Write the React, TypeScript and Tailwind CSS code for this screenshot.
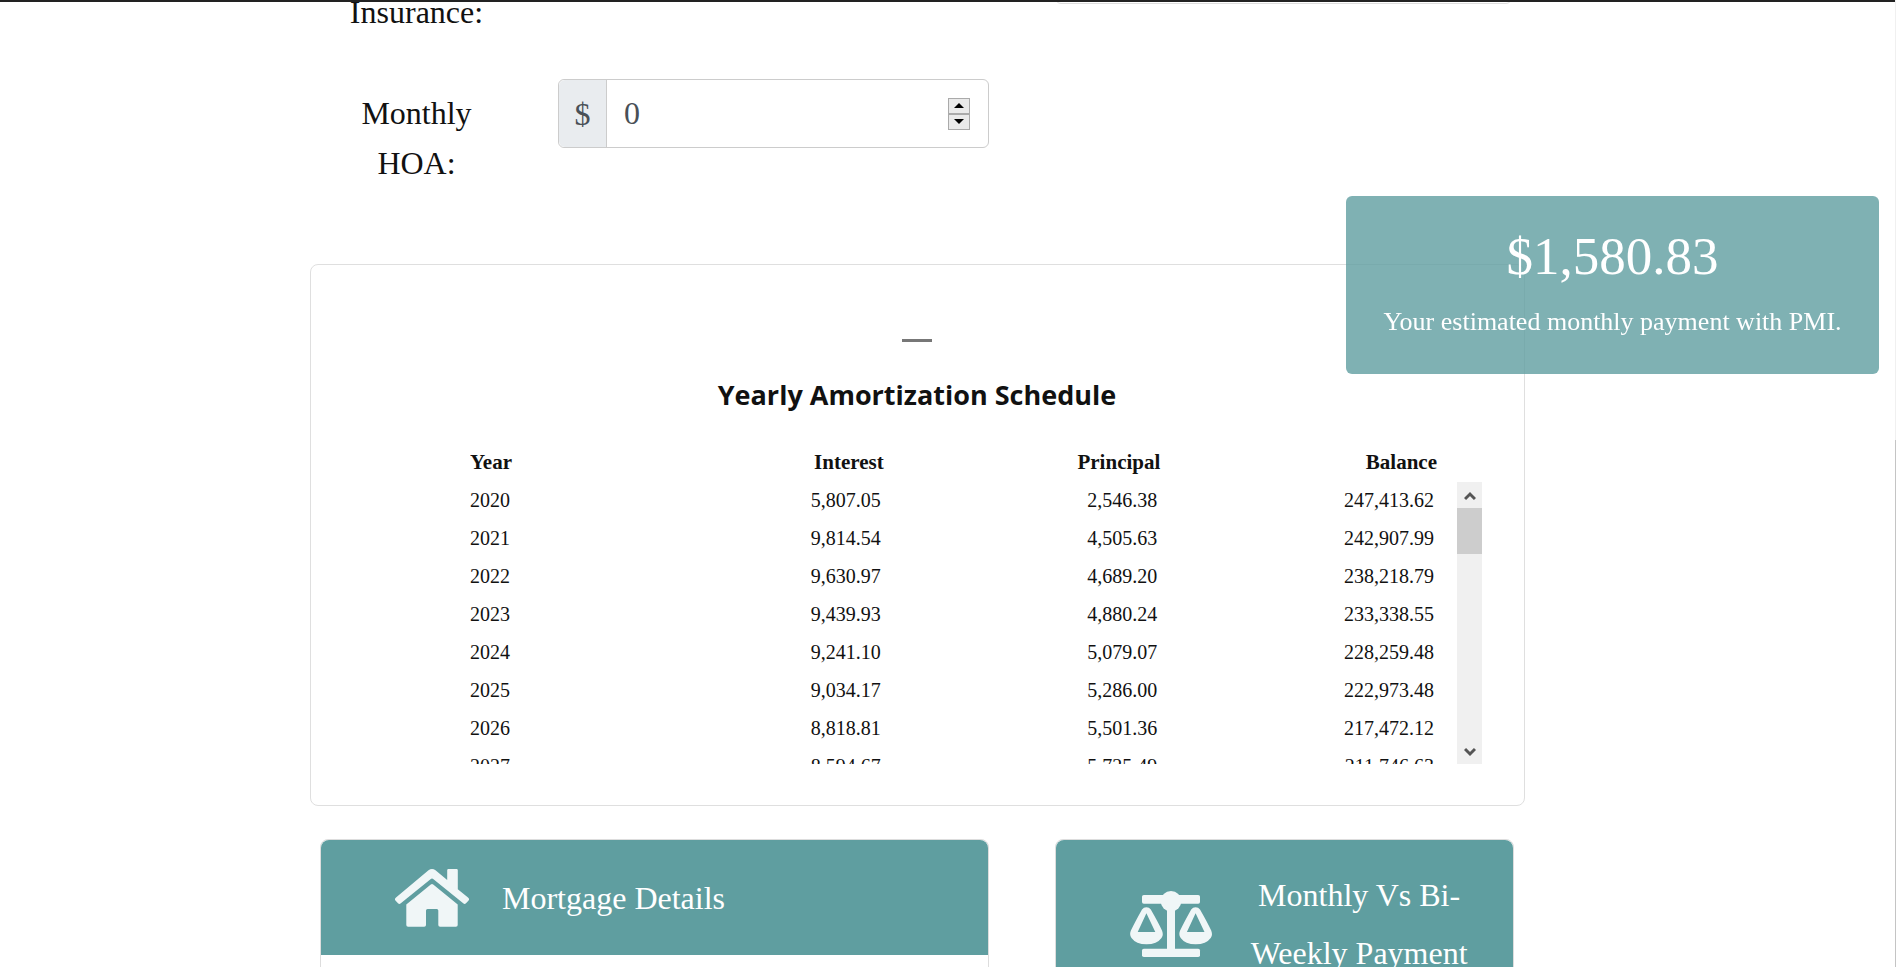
const rows = [
  ["2020", "5,807.05", "2,546.38", "247,413.62"],
  ["2021", "9,814.54", "4,505.63", "242,907.99"],
  ["2022", "9,630.97", "4,689.20", "238,218.79"],
  ["2023", "9,439.93", "4,880.24", "233,338.55"],
  ["2024", "9,241.10", "5,079.07", "228,259.48"],
  ["2025", "9,034.17", "5,286.00", "222,973.48"],
  ["2026", "8,818.81", "5,501.36", "217,472.12"],
  ["2027", "8,594.67", "5,725.49", "211,746.63"],
];

function HomeIcon() {
  return (
    <svg viewBox="0 0 74 58" className="h-[58px] w-[74px] shrink-0 fill-[#f0f6f7]" aria-hidden="true">
      <path d="M53.500 0h8q1.300 0 1.300 1.300V20.300l10.200 8.200q1.800 1.500 .6 3L71 34.200q-1.300 1.300-2.800 .1L38.500 10.200q-1.500-1.200-3 0L5.800 34.300q-1.500 1.200-2.800-.1L.4 31.500q-1.200-1.500 .6-3L33.500 1.300q3.500-2.600 7 0L52.200 11V1.300Q52.200 0 53.500 0z" />
      <path d="M35.800 15.500q1.200-1 2.400 0L62.700 35.500V56q0 1.800-1.800 1.800H45.100q-1.800 0-1.800-1.800V41.500q0-1.500-1.500-1.500H32.500q-1.500 0-1.500 1.500V56q0 1.800-1.800 1.800H13.100q-1.800 0-1.800-1.800V35.500z" />
    </svg>
  );
}

function ScaleIcon() {
  return (
    <svg viewBox="0 0 82 66" className="h-[66px] w-[82px] shrink-0 fill-[#f0f6f7]" aria-hidden="true">
      <rect x="12" y="4" width="58" height="8.700" rx="1.800" />
      <circle cx="41" cy="10.300" r="10.300" />
      <rect x="37" y="12" width="8" height="50" />
      <rect x="12" y="57.700" width="58" height="8.300" rx="1.800" />
      <path fillRule="evenodd" d="M12 18.500q1.600-2.200 4.400-2.200t4.400 2.200Q28 31 32 39.500q1.800 4.500-.5 7.500-4.500 6.300-15 6.300T1.500 47Q-.9 44 .9 39.500 5 31 12 18.500zM16.400 22.300L7.700 41h17.600z" />
      <path fillRule="evenodd" d="M61.200 18.500q1.600-2.200 4.400-2.200t4.400 2.200Q77.200 31 81.200 39.500q1.800 4.500-.5 7.500-4.500 6.300-15 6.300T50.700 47Q48.300 44 50.100 39.500 54.200 31 61.200 18.500zM65.600 22.300L56.900 41h17.600z" />
    </svg>
  );
}

export default function App() {
  return (
    <div className="h-screen overflow-hidden border-t-2 border-[#222] bg-white font-['Liberation_Serif',serif] text-[#111]">
      <div className="flex flex-col pr-[371px] pl-[310px]">
        <div className="-mt-[15px] flex h-[92px] items-start">
          <span className="w-[213px] text-center text-[32px] leading-[50px]">Insurance:</span>
          <div className="ml-[532px] h-[17px] w-[457px] rounded-md border border-[#ddd]" />
        </div>
        <div className="flex items-start">
          <label htmlFor="hoa" className="w-[213px] px-8 pt-[9px] text-center text-[32px] leading-[50px]">
            Monthly HOA:
          </label>
          <div className="ml-[35px] flex h-[69px] w-[431px] items-center rounded-md border border-[#ccc] text-[32px] text-[#495057]">
            <span className="flex h-full w-12 items-center justify-center rounded-l-md border-r border-[#ccc] bg-[#e9ecef]">$</span>
            <input id="hoa" type="text" inputMode="numeric" defaultValue="0" className="h-full min-w-0 flex-1 bg-transparent px-[17px] outline-none" />
            <div className="mr-[18px] flex w-[22px] flex-col">
              <button aria-label="Increase" className="flex h-4 items-center justify-center border border-[#aaa] bg-[#eaeaea]">
                <svg viewBox="0 0 10 5" className="h-[5px] w-[10px]"><path d="M5 0l5 5H0z" /></svg>
              </button>
              <button aria-label="Decrease" className="flex h-4 items-center justify-center border border-[#aaa] bg-[#eaeaea]">
                <svg viewBox="0 0 10 5" className="h-[5px] w-[10px]"><path d="M5 5L0 0h10z" /></svg>
              </button>
            </div>
          </div>
        </div>

        <section className="mt-[76px] flex h-[542px] flex-col rounded-lg border border-[#dfdfdf] pr-[42px] pl-[159px]">
          <div className="mt-[74px] mr-[118px] flex flex-col items-center">
            <div className="h-[3px] w-[30px] bg-[#777]" />
            <h2 className="mt-[29px] font-['Open_Sans',sans-serif] text-[27px] leading-[48px] font-bold">Yearly Amortization Schedule</h2>
          </div>
          <div className="mt-6 flex h-[321px] overflow-hidden">
            <div className="flex-1">
              <table className="w-full table-fixed border-collapse text-[20px] leading-[38px]">
                <thead className="text-[21px]">
                  <tr>
                    <th className="w-[137px] p-0 text-left">Year</th>
                    <th className="p-0 text-right">Interest</th>
                    <th className="p-0 text-right">Principal</th>
                    <th className="p-0 text-right">Balance</th>
                  </tr>
                </thead>
                <tbody>
                  {rows.map(([year, ...values]) => (
                    <tr key={year}>
                      <td className="p-0">{year}</td>
                      {values.map((value) => (
                        <td key={value} className="p-0 pr-[3px] text-right">{value}</td>
                      ))}
                    </tr>
                  ))}
                </tbody>
              </table>
            </div>
            <div className="mt-[39px] ml-5 flex w-[25px] flex-col items-center bg-[#f0f0f0]">
              <svg viewBox="0 0 12 10" className="mt-[9px] mb-[7px] h-[10px] w-3 fill-none stroke-[#555] stroke-[3]"><path d="M1 8l5-5 5 5" /></svg>
              <div className="h-[46px] w-full bg-[#cdcdcd]" />
              <svg viewBox="0 0 12 10" className="mt-auto mb-[7px] h-[10px] w-3 fill-none stroke-[#555] stroke-[3]"><path d="M1 2l5 5 5-5" /></svg>
            </div>
          </div>
        </section>

        <div className="mt-[33px] flex items-start pr-[11px] pl-[10px]">
          <section className="flex-[669] rounded-lg border border-[#ddd]">
            <header className="flex h-[115px] items-center rounded-t-lg bg-[#5f9ea0] pl-[74px] text-white">
              <HomeIcon />
              <h3 className="ml-[33px] text-[32px] leading-[58px]">Mortgage Details</h3>
            </header>
            <div className="h-[200px]" />
          </section>
          <section className="ml-[66px] flex-[458] rounded-lg border border-[#ddd]">
            <header className="flex items-center rounded-t-lg bg-[#5f9ea0] py-[26px] pr-[38px] pl-[74px] text-white">
              <ScaleIcon />
              <h3 className="ml-[31px] flex-1 text-center text-[32px] leading-[58px]">Monthly Vs Bi-Weekly Payment</h3>
            </header>
          </section>
        </div>
      </div>

      <aside className="fixed top-[196px] right-[17px] flex h-[178px] w-[533px] flex-col items-center rounded-md bg-[#5f9ea0]/80 text-white">
        <p className="mt-6 text-[53px] leading-[72px]">$1,580.83</p>
        <p className="mt-[10px] text-[26px] leading-[40px]">Your estimated monthly payment with PMI.</p>
      </aside>
      <div className="fixed top-0 right-0 h-full w-px bg-[#f0f0f0] pt-[440px]">
        <div className="h-full bg-[#c4c4c4]" />
      </div>
    </div>
  );
}
